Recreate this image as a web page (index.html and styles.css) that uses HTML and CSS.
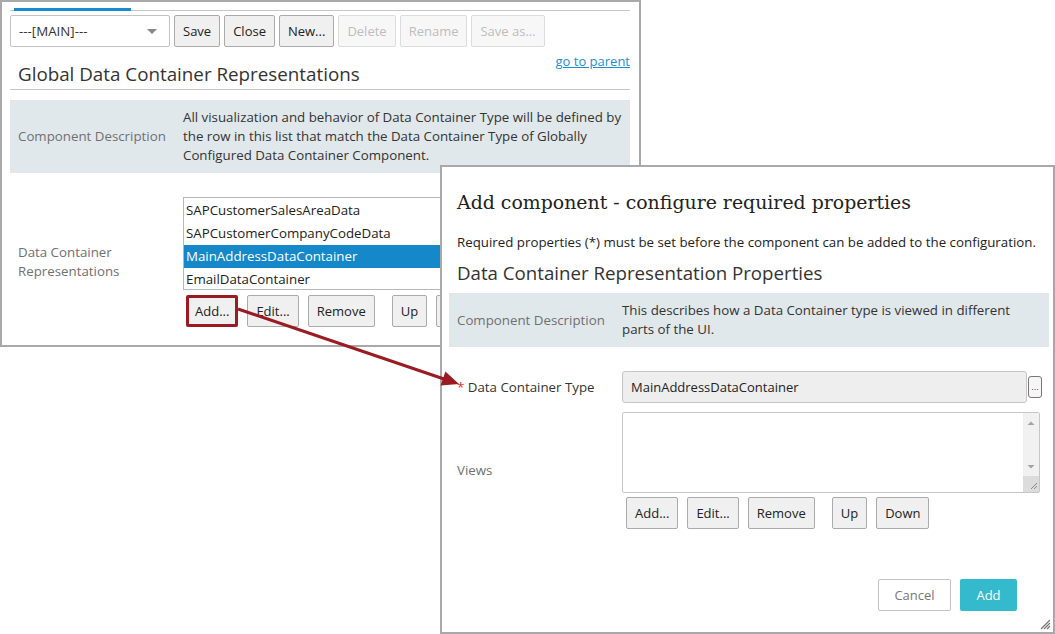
FILE: index.html
```html
<!DOCTYPE html>
<html lang="en">
<head>
    <meta charset="UTF-8">
    <title>Global Data Container Representations</title>
    <link rel="stylesheet" href="styles.css">
</head>
<body>
<div class="canvas">

    <!-- Main configuration panel -->
    <div class="main-panel">
        <div class="tabs"><span class="tab-active"></span></div>

        <div class="toolbar">
            <div class="select">---[MAIN]---<span class="caret"></span></div>
            <button class="btn">Save</button>
            <button class="btn">Close</button>
            <button class="btn">New...</button>
            <button class="btn" disabled>Delete</button>
            <button class="btn" disabled>Rename</button>
            <button class="btn" disabled>Save as...</button>
        </div>

        <div class="page-head">
            <h2>Global Data Container Representations</h2>
            <a href="#" class="parent-link">go to parent</a>
        </div>

        <div class="prop-row desc">
            <div class="prop-label">Component Description</div>
            <div class="prop-value">All visualization and behavior of Data Container Type will be defined by<br>the row in this list that match the Data Container Type of Globally<br>Configured Data Container Component.</div>
        </div>

        <div class="prop-row list-row">
            <div class="prop-label">Data Container<br>Representations</div>
            <div class="prop-value">
                <div class="listbox">
                    <div class="list-item">SAPCustomerSalesAreaData</div>
                    <div class="list-item">SAPCustomerCompanyCodeData</div>
                    <div class="list-item selected">MainAddressDataContainer</div>
                    <div class="list-item">EmailDataContainer</div>
                </div>
                <div class="btn-row">
                    <button class="btn highlight">Add...</button>
                    <button class="btn">Edit...</button>
                    <button class="btn">Remove</button>
                    <button class="btn group">Up</button>
                    <button class="btn hidden-btn">Down</button>
                </div>
            </div>
        </div>
    </div>

    <!-- Add component dialog -->
    <div class="dialog">
        <h1 class="dialog-title">Add component - configure required properties</h1>
        <p class="dialog-note">Required properties (*) must be set before the component can be added to the configuration.</p>
        <h2 class="dialog-sub">Data Container Representation Properties</h2>

        <div class="prop-row desc dlg-desc">
            <div class="prop-label">Component Description</div>
            <div class="prop-value">This describes how a Data Container type is viewed in different<br>parts of the UI.</div>
        </div>

        <div class="prop-row type-row">
            <div class="prop-label required"><span class="star">*</span> Data Container Type</div>
            <div class="prop-value field-line">
                <div class="text-input">MainAddressDataContainer</div>
                <button class="dots">...</button>
            </div>
        </div>

        <div class="prop-row views-row">
            <div class="prop-label">Views</div>
            <div class="prop-value">
                <div class="textarea">
                    <div class="scrollbar">
                        <svg width="16" height="79" viewBox="0 0 16 79">
                            <path d="M4.5 12 L8 8.5 L11.5 12 Z" fill="#a3a3a3"/>
                            <path d="M4.5 52 L8 55.5 L11.5 52 Z" fill="#a3a3a3"/>
                            <rect x="0" y="63" width="16" height="16" fill="#dcdcdc"/>
                            <path d="M14 70 L8 76 M14 73 L11 76" stroke="#8a8a8a" stroke-width="1"/>
                        </svg>
                    </div>
                </div>
                <div class="btn-row">
                    <button class="btn">Add...</button>
                    <button class="btn">Edit...</button>
                    <button class="btn">Remove</button>
                    <button class="btn group">Up</button>
                    <button class="btn">Down</button>
                </div>
            </div>
        </div>

        <div class="dialog-footer">
            <button class="btn-cancel">Cancel</button>
            <button class="btn-primary">Add</button>
        </div>

        <svg class="grip" width="12" height="12" viewBox="0 0 12 12">
            <path d="M11 2 L2 11 M11 5 L5 11 M11 8 L8 11" stroke="#777" stroke-width="1.2"/>
        </svg>
    </div>

    <!-- Callout arrow -->
    <svg class="callout" width="1055" height="634" viewBox="0 0 1055 634">
        <line x1="238" y1="309" x2="444" y2="379" stroke="#9b1b23" stroke-width="3"/>
        <polygon points="459,384 440.6,385.6 445.4,371.6" fill="#9b1b23"/>
    </svg>
</div>
</body>
</html>
```

FILE: styles.css
```css
body {
    margin: 0;
    font-family: "Open Sans", "Noto Sans", sans-serif;
    font-size: 13.3px;
    color: #333;
    background: #fff;
}

.canvas {
    position: relative;
    width: 1055px;
    height: 634px;
    overflow: hidden;
}

/* ---------- main panel ---------- */
.main-panel {
    width: 641px;
    height: 347px;
    box-sizing: border-box;
    border: 2px solid #a9a9a9;
    padding: 6px 8px 0 8px;
}

.tabs {
    border-bottom: 1px solid #c6c6c6;
    margin-right: 1px;
}

.tab-active {
    display: block;
    width: 117px;
    height: 3px;
    margin-left: 4px;
    margin-bottom: -1px;
    background: #1b8bd1;
}

.toolbar {
    display: flex;
    gap: 4px;
    margin-top: 4px;
}

.select {
    width: 160px;
    height: 32px;
    box-sizing: border-box;
    border: 1px solid #c3c3c3;
    border-radius: 2px;
    padding-left: 8px;
    line-height: 30px;
    font-size: 13.3px;
    color: #333;
    position: relative;
}

.caret {
    position: absolute;
    right: 12px;
    top: 13px;
    border-left: 5px solid transparent;
    border-right: 5px solid transparent;
    border-top: 5px solid #888;
}

.btn {
    height: 32px;
    box-sizing: border-box;
    padding: 0 8px;
    border: 1px solid #ababab;
    border-radius: 2px;
    background: #f0f0f0;
    font-family: inherit;
    font-size: 13px;
    color: #222;
}

.btn:disabled {
    background: #f7f7f7;
    border-color: #dcdcdc;
    color: #bdbdbd;
}

/* sits under the dialog, only its left edge shows */
.hidden-btn {
    color: transparent;
}

.page-head {
    display: flex;
    justify-content: space-between;
    height: 43px;
    box-sizing: border-box;
    border-bottom: 1px solid #c6c6c6;
    margin-right: 1px;
}

.page-head h2 {
    margin: 0;
    padding: 16px 0 0 8px;
    font-size: 18.8px;
    font-weight: normal;
    line-height: 22px;
    color: #333;
}

.parent-link {
    margin-top: 5px;
    color: #1e8fd6;
    font-size: 13px;
    line-height: 18px;
}

.prop-row {
    display: grid;
    grid-template-columns: 173px 1fr;
}

.prop-label {
    padding-left: 8px;
    color: #707070;
    align-self: center;
    line-height: 19px;
}

.desc {
    margin-top: 10px;
    padding: 8px 0;
    background: #e1e8eb;
    margin-right: 1px;
    line-height: 19px;
}

.list-row {
    margin-top: 24px;
}

.listbox {
    width: 440px;
    height: 93px;
    box-sizing: border-box;
    border: 1px solid #b8b8b8;
    padding-top: 1px;
}

.list-item {
    height: 23px;
    line-height: 23px;
    padding-left: 2px;
    color: #222;
}

.list-item.selected {
    background: #1588c9;
    color: #fff;
}

.btn-row {
    display: flex;
    gap: 9px;
    margin-top: 5px;
    padding-left: 3px;
}

.btn-row .group {
    margin-left: 8px;
}

.btn.highlight {
    border: 3px solid #9b1b23;
    padding: 0 6px;
}

/* ---------- dialog ---------- */
.dialog {
    position: absolute;
    left: 440px;
    top: 165px;
    width: 615px;
    height: 469px;
    box-sizing: border-box;
    border: 2px solid #a9a9a9;
    background: #fff;
    padding: 23px 4px 21px 7px;
    display: flex;
    flex-direction: column;
}

.dialog-title {
    margin: 0 0 0 8px;
    font-family: "DejaVu Serif", serif;
    font-size: 18.9px;
    font-weight: normal;
    line-height: 24px;
    color: #222;
}

.dialog-note {
    margin: 19px 0 0 8px;
    line-height: 18px;
    color: #222;
}

.dialog-sub {
    margin: 10px 0 0 8px;
    font-size: 18.7px;
    font-weight: normal;
    line-height: 24px;
    color: #333;
}

.dlg-desc {
    margin-top: 8px;
    margin-right: 0;
}

.type-row {
    margin-top: 24px;
}

.prop-label.required {
    color: #333;
}

.star {
    color: #d9302c;
}

.field-line {
    display: flex;
    align-items: center;
}

.text-input {
    width: 405px;
    height: 32px;
    box-sizing: border-box;
    border: 1px solid #c6c6c6;
    border-radius: 3px;
    background: #eee;
    padding-left: 8px;
    line-height: 30px;
    font-size: 13px;
    color: #222;
}

.dots {
    width: 14px;
    height: 22px;
    margin-left: 1px;
    padding: 0;
    border: 1px solid #777;
    border-radius: 3px;
    background: #f6f6f6;
    font-size: 9px;
    line-height: 12px;
    color: #444;
}

.views-row {
    margin-top: 9px;
}

.textarea {
    width: 418px;
    height: 81px;
    box-sizing: border-box;
    border: 1px solid #c6c6c6;
    border-radius: 2px;
    display: flex;
    justify-content: flex-end;
}

.scrollbar {
    width: 16px;
    height: 79px;
    background: #f1f1f1;
    overflow: hidden;
}

.scrollbar svg {
    display: block;
}

.views-row .btn-row {
    padding-left: 4px;
    margin-top: 4px;
}

.dialog-footer {
    margin-top: auto;
    display: flex;
    justify-content: flex-end;
    gap: 9px;
    padding-right: 32px;
}

.btn-cancel,
.btn-primary {
    height: 32px;
    box-sizing: border-box;
    border-radius: 2px;
    font-family: inherit;
    font-size: 13px;
}

.btn-cancel {
    width: 73px;
    background: #fff;
    border: 1px solid #c3c3c3;
    color: #777;
}

.btn-primary {
    width: 57px;
    background: #35b9cd;
    border: none;
    color: #fff;
}

.grip {
    position: absolute;
    right: 2px;
    bottom: 2px;
}

.callout {
    position: absolute;
    left: 0;
    top: 0;
    pointer-events: none;
}
```
